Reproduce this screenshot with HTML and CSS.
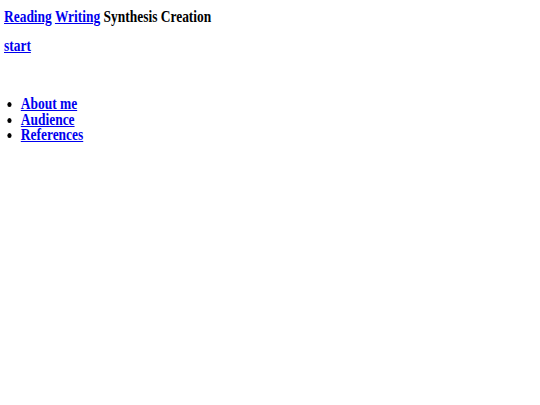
FILE: index.html
```html
<!DOCTYPE html>
<html>
<head>
<meta charset="utf-8">
<link rel="stylesheet" href="styles.css">
</head>
<body>
<div class="page">
<div class="nav"><a href="#">Reading</a> <a href="#">Writing</a> Synthesis Creation</div>
<div class="start"><a href="#">start</a></div>
<ul class="menu">
<li><a href="#">About me</a></li>
<li><a href="#">Audience</a></li>
<li><a href="#">References</a></li>
</ul>
</div>
</body>
</html>
```
FILE: styles.css
```css
html, body { margin: 0; padding: 0; background: #fff; }
body {
  font-family: "Liberation Serif", "Times New Roman", serif;
  font-weight: bold;
  font-size: 16px;
  color: #000;
  padding: 8px 4px;
}
.page { transform: scaleX(0.84); transform-origin: 0 0; }
a { color: #0000ee; text-decoration: underline; }
.nav { line-height: 17px; }
.start { margin-top: 12px; line-height: 17px; }
.menu { margin: 42px 0 0 0; padding-left: 20px; }
.menu li { line-height: 15.5px; }
```
